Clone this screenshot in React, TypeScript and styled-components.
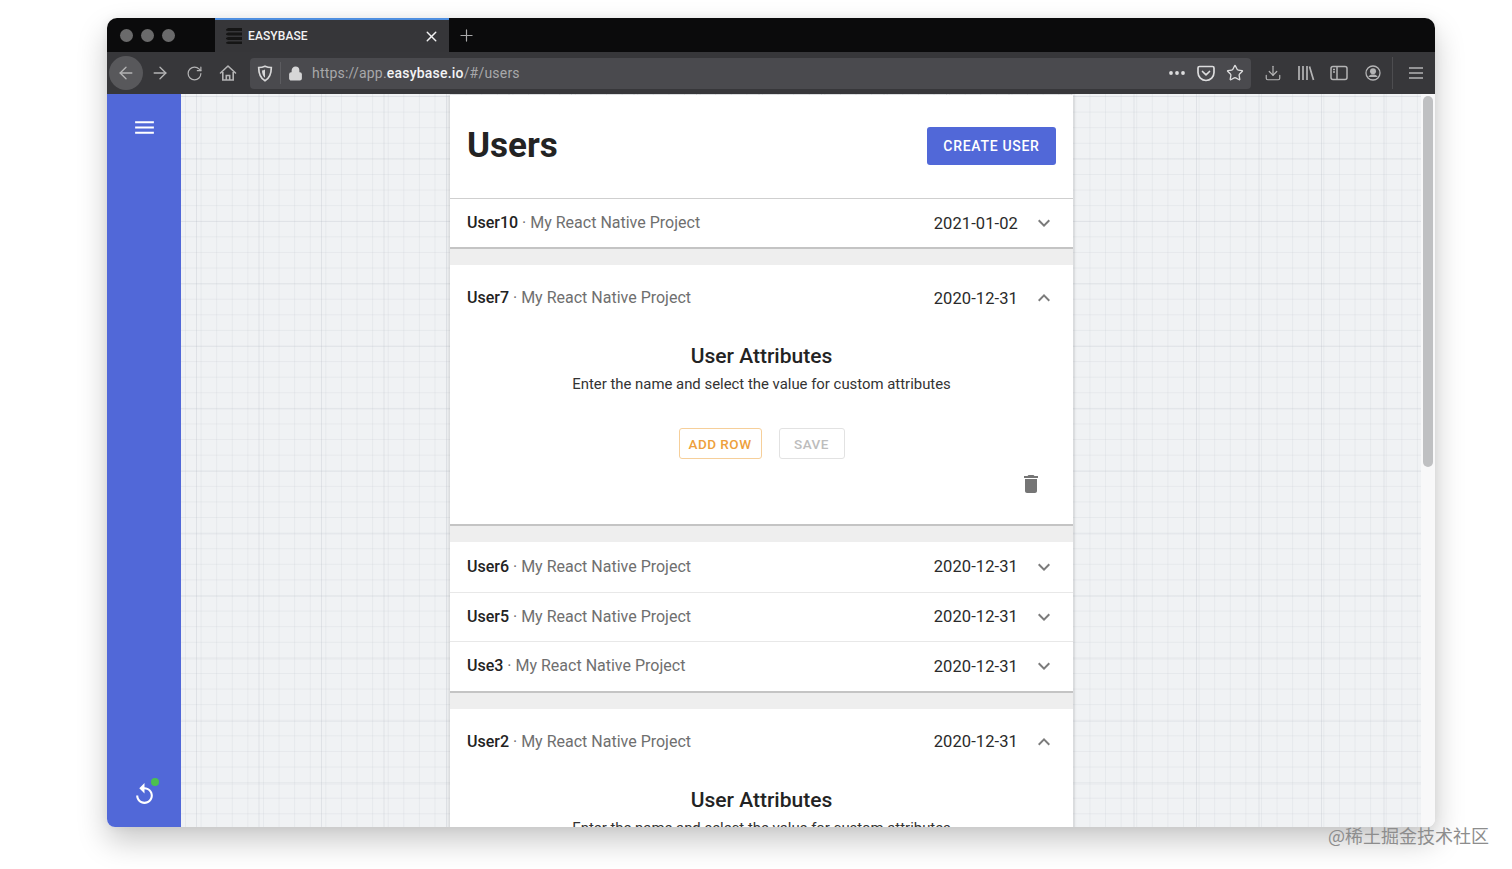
import React from "react";
import styled, { createGlobalStyle } from "styled-components";
import {
  ArrowLeft,
  ArrowRight,
  RotateCw,
  Download,
  Lock,
  Plus,
  Star,
  X,
} from "lucide-react";
import { MdDelete, MdExpandLess, MdExpandMore, MdMenu, MdReplay } from "react-icons/md";

const Global = createGlobalStyle`
  html, body {
    margin: 0;
    padding: 0;
    background: #fff;
    overflow: hidden;
  }
  body {
    font-family: Roboto, "Liberation Sans", sans-serif;
  }
`;

const Stage = styled.div`
  position: relative;
  width: 1512px;
  height: 869px;
  padding: 18px 0 0 107px;
  box-sizing: border-box;
  overflow: hidden;
`;

const Watermark = styled.div`
  position: absolute;
  left: 1328px;
  top: 824px;
  font: 400 18px/22px "Noto Sans CJK SC", sans-serif;
  color: #8d8d8d;
  white-space: nowrap;
`;

const Window = styled.div`
  width: 1328px;
  height: 809px;
  display: flex;
  flex-direction: column;
  border-radius: 10px 10px 8px 8px;
  overflow: hidden;
  background: #fff;
  box-shadow: 0 14px 30px rgba(0, 0, 0, 0.22), 0 0 10px rgba(0, 0, 0, 0.06);
`;

const TitleBar = styled.div`
  height: 34px;
  flex: none;
  display: flex;
  align-items: stretch;
  background: #0b0b0c;
`;

const Lights = styled.div`
  width: 108px;
  display: flex;
  align-items: center;
  gap: 8px;
  padding-left: 12.5px;
  box-sizing: border-box;
`;

const Light = styled.span`
  width: 13px;
  height: 13px;
  border-radius: 50%;
  background: #6a6a6b;
`;

const Tab = styled.div`
  width: 234px;
  display: flex;
  align-items: center;
  box-sizing: border-box;
  padding: 0 9px 0 10px;
  background: #363639;
  border-top: 2px solid #4f8fe0;
  color: #f2f2f3;
  font-size: 12px;
  font-weight: 500;
  letter-spacing: 0.1px;
`;

const TabTitle = styled.span`
  flex: 1;
  margin-left: 5px;
`;

const NewTab = styled.div`
  width: 34px;
  display: flex;
  align-items: center;
  justify-content: center;
  color: #a9a9aa;
`;

const ToolBar = styled.div`
  height: 42px;
  flex: none;
  display: flex;
  align-items: center;
  padding-left: 2px;
  background: #37373a;
  color: #b4b4b5;
`;

const ToolSlot = styled.div<{ $active?: boolean; $wide?: boolean }>`
  width: ${(p) => (p.$wide ? "33.3px" : "34px")};
  height: 34px;
  flex: none;
  display: flex;
  align-items: center;
  justify-content: center;
  border-radius: 50%;
  background: ${(p) => (p.$active ? "#58585b" : "transparent")};
`;

const UrlBar = styled.div`
  width: 1001px;
  height: 31px;
  flex: none;
  margin: 0 5px;
  display: flex;
  align-items: center;
  box-sizing: border-box;
  border-radius: 4px;
  background: #4a4a4e;
  padding: 0 2px 0 6px;
`;

const UrlIcon = styled.div`
  width: 18px;
  display: flex;
  align-items: center;
  justify-content: center;
  color: #d6d6d7;
`;

const UrlDivider = styled.span`
  width: 1px;
  height: 22px;
  margin: 0 5px 0 6px;
  background: #5c5c60;
`;

const UrlText = styled.div`
  flex: 1;
  margin-left: 8px;
  font-size: 14px;
  letter-spacing: 0.2px;
  color: #a8a8aa;
  b {
    font-weight: 500;
    color: #f4f4f5;
  }
`;

const UrlAction = styled.div`
  width: 29px;
  display: flex;
  align-items: center;
  justify-content: center;
  color: #dcdcdd;
`;

const ToolDivider = styled.span`
  width: 1px;
  height: 32px;
  flex: none;
  margin: 0 6px 0 3px;
  background: #4d4d50;
`;

const Body = styled.div`
  flex: 1;
  min-height: 0;
  display: flex;
`;

const SideBar = styled.aside`
  width: 74px;
  flex: none;
  display: flex;
  flex-direction: column;
  align-items: center;
  justify-content: space-between;
  padding: 21px 0 21px;
  box-sizing: border-box;
  background: #5168d8;
  color: #fff;
`;

const SyncIcon = styled.div`
  position: relative;
  width: 24px;
  height: 24px;
`;

const SyncDot = styled.span`
  position: absolute;
  right: -3px;
  top: -4px;
  width: 8px;
  height: 8px;
  border-radius: 50%;
  background: #4cc04f;
`;

const Canvas = styled.main`
  flex: 1;
  min-width: 0;
  padding-left: 269px;
  padding-top: 1px;
  box-sizing: border-box;
  overflow: hidden;
  background-color: #f0f2f4;
  background-image:
    linear-gradient(to right, rgba(170, 176, 186, 0.24) 1px, transparent 1px),
    linear-gradient(to bottom, rgba(170, 176, 186, 0.14) 1px, transparent 1px),
    linear-gradient(to right, rgba(190, 195, 203, 0.2) 1px, transparent 1px),
    linear-gradient(to bottom, rgba(190, 195, 203, 0.2) 1px, transparent 1px);
  background-size: 62.5px 62.5px, 62.5px 62.5px, 15.6px 15.6px, 15.6px 15.6px;
  background-position: 15px 0, 0 2px, 4px 0, 0 2px;
`;

const ScrollTrack = styled.div`
  width: 14px;
  flex: none;
  padding: 2px 2px 0;
  box-sizing: border-box;
  background: #f8f8f9;
`;

const ScrollThumb = styled.div`
  height: 371px;
  border-radius: 5px;
  background: #bfc0c2;
`;

const Panel = styled.section`
  width: 623px;
  background: #eeeeee;
  box-shadow: 0 0 4px rgba(0, 0, 0, 0.22);
`;

const Header = styled.header`
  height: 104px;
  display: flex;
  align-items: center;
  justify-content: space-between;
  padding: 0 17px 2px 17px;
  box-sizing: border-box;
  background: #fff;
  border-bottom: 1px solid #cfcfcf;
`;

const Title = styled.h1`
  margin: 0;
  font-size: 35px;
  font-weight: 700;
  color: #232323;
`;

const PrimaryButton = styled.button`
  width: 129px;
  height: 38px;
  border: 0;
  border-radius: 3px;
  background: #5168d8;
  color: #fff;
  font: 500 14px Roboto, sans-serif;
  letter-spacing: 0.7px;
`;

const Group = styled.div`
  background: #fff;
  border-bottom: 2px solid #c4c4c4;
  margin-bottom: 16px;
`;

const Row = styled.div<{ $open?: boolean; $divider?: boolean; $compact?: boolean }>`
  height: ${(p) => (p.$open ? "66px" : p.$compact ? "48px" : "49.5px")};
  display: flex;
  align-items: center;
  padding: 0 17px;
  box-sizing: border-box;
  border-top: ${(p) => (p.$divider ? "1px solid #e8e8e8" : "0")};
  color: #7b7b7b;
`;

const Name = styled.span`
  flex: 1;
  font-size: 16px;
  color: #6f6f6f;
  padding-bottom: 1px;
  b {
    font-weight: 500;
    color: #222;
  }
`;

const DateText = styled.span`
  font-size: 16.5px;
  color: #2a2a2a;
  letter-spacing: 0.1px;
  margin-right: 14px;
`;

const Details = styled.div`
  height: 193px;
  display: flex;
  flex-direction: column;
  align-items: center;
  box-sizing: border-box;
  padding: 13px 17px 0;
`;

const DetailsTitle = styled.h2`
  margin: 0;
  font-size: 21px;
  line-height: 25px;
  font-weight: 500;
  color: #232323;
`;

const DetailsText = styled.p`
  margin: 6px 0 0;
  font-size: 14.9px;
  line-height: 18px;
  color: #333;
`;

const Actions = styled.div`
  display: flex;
  gap: 17px;
  margin-top: 35px;
`;

const OutlineButton = styled.button<{ $disabled?: boolean }>`
  height: 31px;
  padding: 0;
  width: ${(p) => (p.$disabled ? "66px" : "83px")};
  border-radius: 3px;
  background: #fff;
  border: 1px solid ${(p) => (p.$disabled ? "#e2e2e2" : "#f6cf9a")};
  color: ${(p) => (p.$disabled ? "#bdbdbd" : "#ee9f3c")};
  font: 500 13.5px Roboto, sans-serif;
  letter-spacing: 0.5px;
`;

const TrashRow = styled.div`
  align-self: stretch;
  display: flex;
  justify-content: flex-end;
  margin-top: 13px;
  padding-right: 13px;
  color: #757575;
`;

const Favicon = () => (
  <svg width="18" height="18" viewBox="0 0 18 18">
    <g fill="#151515">
      <path d="M1 2.5 3 1h14v3H3L1 3.5z" />
      <path d="M1 6.8 3 5.5h14v3H3L1 7.8z" />
      <path d="M1 11 3 10h14v3H3l-2-1z" />
      <path d="M1 15.4 3 14.4h14V17H3l-2-.8z" />
    </g>
  </svg>
);

const HomeIcon = () => (
  <svg width="18" height="18" viewBox="0 0 18 18" fill="none" stroke="currentColor" strokeWidth="1.6">
    <path d="M1.5 9 9 2l7.5 7" strokeLinecap="round" strokeLinejoin="round" />
    <path d="M3.8 8v8h10.4V8" />
    <path d="M7.3 16v-4.5h3.4V16" />
  </svg>
);

const ShieldIcon = () => (
  <svg width="16" height="17" viewBox="0 0 16 17" fill="none" stroke="currentColor" strokeWidth="1.7">
    <path d="M8 1.2c2 .9 4 1.3 6.3 1.3 0 6-1.4 10.6-6.3 13.3C3.1 13.1 1.7 8.5 1.7 2.5 4 2.5 6 2.1 8 1.2z" />
    <path d="M8 4.5v8.2c-2-1.5-3-4-3-7.2 1 0 2-.4 3-1z" fill="currentColor" stroke="none" />
  </svg>
);

const PocketIcon = () => (
  <svg width="18" height="17" viewBox="0 0 18 17" fill="none" stroke="currentColor" strokeWidth="1.7">
    <path d="M2.5 1.5h13A1.5 1.5 0 0 1 17 3v4.5a8 8 0 0 1-16 0V3a1.5 1.5 0 0 1 1.5-1.5z" />
    <path d="m5.5 6.5 3.5 3.3 3.500-3.300" strokeLinecap="round" strokeLinejoin="round" />
  </svg>
);

const DotsIcon = () => (
  <svg width="18" height="6" viewBox="0 0 18 6" fill="currentColor">
    <circle cx="3" cy="3" r="1.9" />
    <circle cx="9" cy="3" r="1.9" />
    <circle cx="15" cy="3" r="1.9" />
  </svg>
);

const LibraryIcon = () => (
  <svg width="18" height="16" viewBox="0 0 18 16" fill="none" stroke="currentColor" strokeWidth="1.7">
    <path d="M2 1v14M6 1v14M10 1v14M12.5 1.5 16.5 15" />
  </svg>
);

const SidebarIcon = () => (
  <svg width="18" height="16" viewBox="0 0 18 16" fill="none" stroke="currentColor" strokeWidth="1.5">
    <rect x="1" y="1.5" width="16" height="13" rx="2" />
    <path d="M7 1.5v13" />
    <path d="M3 4.5h2M3 7h2" />
  </svg>
);

const AccountIcon = () => (
  <svg width="16" height="16" viewBox="0 0 16 16" fill="none" stroke="currentColor" strokeWidth="1.3">
    <circle cx="8" cy="8" r="7" />
    <circle cx="8" cy="6.2" r="3" fill="currentColor" stroke="none" />
    <path d="M3.3 12c1-1.900 2.600-2.500 4.700-2.500s3.700.6 4.700 2.500" fill="currentColor" stroke="none" />
  </svg>
);

const BurgerIcon = () => (
  <svg width="16" height="14" viewBox="0 0 16 14" stroke="currentColor" strokeWidth="1.6">
    <path d="M1 2h14M1 7h14M1 12h14" />
  </svg>
);

const UserRow = ({
  name,
  date,
  open,
  divider,
  compact,
}: {
  name: string;
  date: string;
  open?: boolean;
  divider?: boolean;
  compact?: boolean;
}) => (
  <Row $open={open} $divider={divider} $compact={compact}>
    <Name>
      <b>{name}</b> · My React Native Project
    </Name>
    <DateText>{date}</DateText>
    {open ? <MdExpandLess size={24} /> : <MdExpandMore size={24} />}
  </Row>
);

const AttributesHead = () => (
  <>
    <DetailsTitle>User Attributes</DetailsTitle>
    <DetailsText>Enter the name and select the value for custom attributes</DetailsText>
  </>
);

export default function App() {
  return (
    <Stage>
      <Global />
      <Window>
        <TitleBar>
          <Lights>
            <Light />
            <Light />
            <Light />
          </Lights>
          <Tab>
            <Favicon />
            <TabTitle>EASYBASE</TabTitle>
            <X size={17} strokeWidth={2} />
          </Tab>
          <NewTab>
            <Plus size={19} strokeWidth={1.5} />
          </NewTab>
        </TitleBar>
        <ToolBar>
          <ToolSlot $active>
            <ArrowLeft size={20} strokeWidth={1.6} />
          </ToolSlot>
          <ToolSlot>
            <ArrowRight size={20} strokeWidth={1.6} />
          </ToolSlot>
          <ToolSlot>
            <RotateCw size={17} strokeWidth={1.7} />
          </ToolSlot>
          <ToolSlot>
            <HomeIcon />
          </ToolSlot>
          <UrlBar>
            <UrlIcon>
              <ShieldIcon />
            </UrlIcon>
            <UrlDivider />
            <UrlIcon>
              <Lock size={15} strokeWidth={2.4} fill="currentColor" />
            </UrlIcon>
            <UrlText>
              https://app.<b>easybase.io</b>/#/users
            </UrlText>
            <UrlAction>
              <DotsIcon />
            </UrlAction>
            <UrlAction>
              <PocketIcon />
            </UrlAction>
            <UrlAction>
              <Star size={18} strokeWidth={1.8} />
            </UrlAction>
          </UrlBar>
          <ToolSlot $wide>
            <Download size={18} strokeWidth={1.6} />
          </ToolSlot>
          <ToolSlot $wide>
            <LibraryIcon />
          </ToolSlot>
          <ToolSlot $wide>
            <SidebarIcon />
          </ToolSlot>
          <ToolSlot $wide>
            <AccountIcon />
          </ToolSlot>
          <ToolDivider />
          <ToolSlot $wide>
            <BurgerIcon />
          </ToolSlot>
        </ToolBar>
        <Body>
          <SideBar>
            <MdMenu size={25} />
            <SyncIcon>
              <MdReplay size={25} />
              <SyncDot />
            </SyncIcon>
          </SideBar>
          <Canvas>
            <Panel>
              <Header>
                <Title>Users</Title>
                <PrimaryButton>CREATE USER</PrimaryButton>
              </Header>
              <Group>
                <UserRow name="User10" date="2021-01-02" compact />
              </Group>
              <Group>
                <UserRow name="User7" date="2020-12-31" open />
                <Details>
                  <AttributesHead />
                  <Actions>
                    <OutlineButton>ADD ROW</OutlineButton>
                    <OutlineButton $disabled>SAVE</OutlineButton>
                  </Actions>
                  <TrashRow>
                    <MdDelete size={24} />
                  </TrashRow>
                </Details>
              </Group>
              <Group>
                <UserRow name="User6" date="2020-12-31" />
                <UserRow name="User5" date="2020-12-31" divider />
                <UserRow name="Use3" date="2020-12-31" divider />
              </Group>
              <Group>
                <UserRow name="User2" date="2020-12-31" open />
                <Details>
                  <AttributesHead />
                </Details>
              </Group>
            </Panel>
          </Canvas>
          <ScrollTrack>
            <ScrollThumb />
          </ScrollTrack>
        </Body>
      </Window>
      <Watermark>@稀土掘金技术社区</Watermark>
    </Stage>
  );
}
